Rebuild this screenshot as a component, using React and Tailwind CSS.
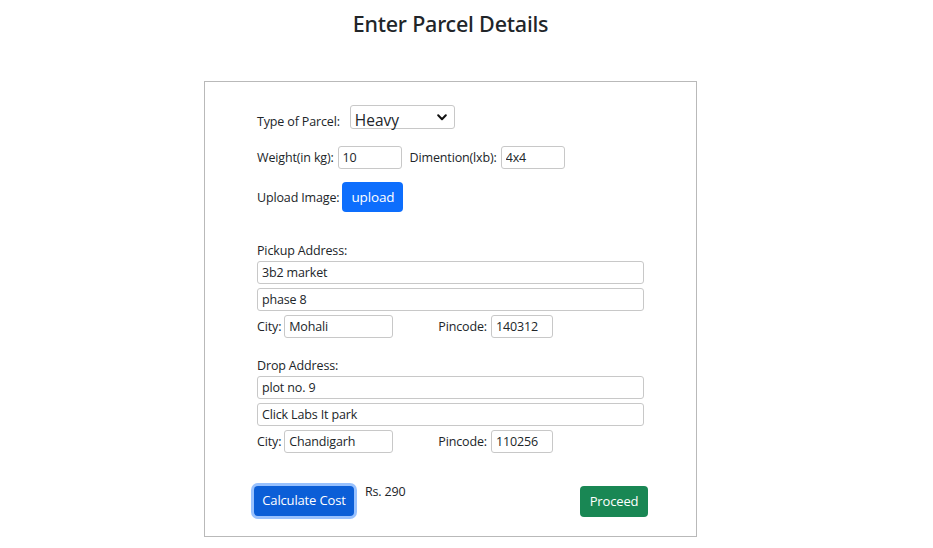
import React from 'react';

function Field({ value, className = '' }) {
  return (
    <input
      type="text"
      defaultValue={value}
      className={`h-[23px] rounded-[3px] border border-[#c8c8c8] bg-white px-[4px] text-[12.5px] tracking-[-0.15px] text-[#212529] outline-none ${className}`}
    />
  );
}

function AddressBlock({ title, line1, line2, city, pincode, className = '' }) {
  return (
    <div className={className}>
      <div className="leading-[18px]">{title}</div>
      <Field value={line1} className="mt-[1px] block w-[387px]" />
      <Field value={line2} className="mt-[4px] block w-[387px]" />
      <div className="mt-[4px] flex items-baseline">
        <span>City:</span>
        <Field value={city} className="ml-[3px] w-[109px]" />
        <span className="ml-[45px]">Pincode:</span>
        <Field value={pincode} className="ml-[4px] w-[62px]" />
      </div>
    </div>
  );
}

export default function App() {
  return (
    <div className="min-h-[548px] bg-white font-['Open_Sans',sans-serif] text-[12.5px] tracking-[-0.15px] text-[#212529]">
      {/* Heading */}
      <div className="ml-[204px] w-[493px] pt-[9px] text-center">
        <h3 className="font-['Noto_Sans',sans-serif] text-[21.5px] font-medium leading-[29px] tracking-[-0.2px]">
          Enter Parcel Details
        </h3>
      </div>

      {/* Form card */}
      <div className="ml-[204px] mt-[43px] h-[456px] w-[493px] border border-[#b9b9b9] pl-[52px] pr-[48px] pt-[23px]">
        <div className="flex h-[24px] items-baseline">
          <span>Type of Parcel:</span>
          <div className="ml-[10px] flex h-[24px] w-[105px] items-center rounded-[3px] border border-[#c8c8c8] pl-[4px] pr-[7px]">
            <span className="pt-[5px] text-[15.5px] leading-[20px] tracking-normal">Heavy</span>
            <svg className="ml-auto" width="10" height="7" viewBox="0 0 10 7" fill="none">
              <path d="M1.2 1.3 5 5.2 8.8 1.3" stroke="#111" strokeWidth="2" strokeLinecap="round" strokeLinejoin="round" />
            </svg>
          </div>
        </div>

        <div className="mt-[17px] flex items-baseline">
          <span>Weight(in kg):</span>
          <Field value="10" className="ml-[4px] w-[64px]" />
          <span className="ml-[8px]">Dimention(lxb):</span>
          <Field value="4x4" className="ml-[4px] w-[64px]" />
        </div>

        <div className="mt-[13px] flex items-baseline">
          <span>Upload Image:</span>
          <button className="ml-[3px] h-[30px] w-[61px] rounded-[4px] bg-[#0d6efd] text-[13.5px] text-white">upload</button>
        </div>

        <AddressBlock
          className="mt-[30px]"
          title="Pickup Address:"
          line1="3b2 market"
          line2="phase 8"
          city="Mohali"
          pincode="140312"
        />

        <AddressBlock
          className="mt-[19px]"
          title="Drop Address:"
          line1="plot no. 9"
          line2="Click Labs It park"
          city="Chandigarh"
          pincode="110256"
        />

        <div className="mt-[33px] flex items-start">
          <button className="-ml-[3px] h-[30px] w-[100px] rounded-[4px] bg-[#0b5ed7] text-[13px] text-white shadow-[0_0_0_3px_rgba(49,132,253,0.5)]">
            Calculate Cost
          </button>
          <span className="ml-[11px] -mt-[3px]">Rs. 290</span>
          <button className="ml-auto h-[31px] w-[68px] rounded-[4px] bg-[#198754] text-[13px] text-white">Proceed</button>
        </div>
      </div>
    </div>
  );
}
